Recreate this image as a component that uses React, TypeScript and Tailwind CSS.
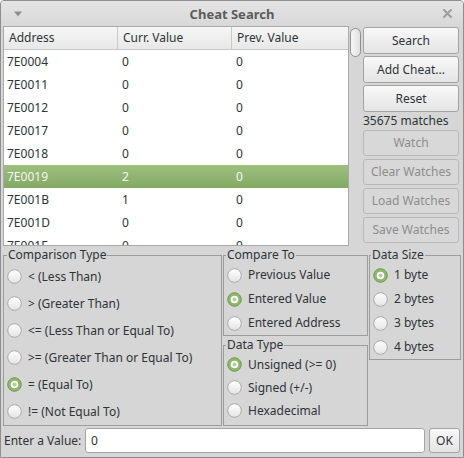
import React from "react";

function Radio({ checked }: { checked?: boolean }) {
  return (
    <svg width="15" height="15" viewBox="0 0 15 15" className="shrink-0">
      <defs>
        <linearGradient id="ru" x1="0" y1="0" x2="0" y2="1">
          <stop offset="0" stopColor="#ffffff" />
          <stop offset="1" stopColor="#e4e4e4" />
        </linearGradient>
      </defs>
      {checked ? (
        <>
          <circle cx="7.5" cy="7.5" r="6.8" fill="#8cb86a" stroke="#6f9a50" strokeWidth="1" />
          <circle cx="7.5" cy="7.5" r="3.8" fill="#ffffff" />
          <circle cx="7.5" cy="7.5" r="2" fill="#b9c8ad" />
        </>
      ) : (
        <circle cx="7.5" cy="7.5" r="6.8" fill="url(#ru)" stroke="#a9a9a9" strokeWidth="1" />
      )}
    </svg>
  );
}

function RadioRow({ label, checked, h }: { label: string; checked?: boolean; h: string }) {
  return (
    <div className={`flex items-center pl-[3px] gap-[6px] ${h}`}>
      <Radio checked={checked} />
      <span className="whitespace-nowrap">{label}</span>
    </div>
  );
}

function Btn({ label, disabled, cls }: { label: string; disabled?: boolean; cls: string }) {
  return (
    <div
      className={`${cls} w-[96px] flex items-center justify-center rounded-[3px] border ${
        disabled
          ? "border-[#b9b9b9] bg-[#d8d8d8] text-[#8d8d8d]"
          : "border-[#a3a3a3] bg-gradient-to-b from-[#f8f8f8] to-[#e4e4e4] text-[#2e3436]"
      }`}
    >
      {label}
    </div>
  );
}

const rows: [string, string, string][] = [
  ["7E0004", "0", "0"],
  ["7E0011", "0", "0"],
  ["7E0012", "0", "0"],
  ["7E0017", "0", "0"],
  ["7E0018", "0", "0"],
  ["7E0019", "2", "0"],
  ["7E001B", "1", "0"],
  ["7E001D", "0", "0"],
  ["7E001F", "0", "0"],
];

export default function App() {
  return (
    <div className="w-[464px] h-[458px] bg-[#d6d6d6] border border-[#8e8e8e] rounded-t-[4px] flex flex-col overflow-hidden text-[12px] leading-[16px] text-[#2e3436] font-['Noto_Sans',sans-serif]">
      {/* title bar */}
      <div className="h-[25px] shrink-0 flex items-center bg-gradient-to-b from-[#e4e4e4] to-[#d8d8d8]">
        <div className="w-[40px] flex justify-center">
          <svg width="10" height="6" viewBox="0 0 10 6" className="ml-[-6px]">
            <path d="M1 0.5 L9 0.5 L5 5.5 Z" fill="#8f8f8f" />
          </svg>
        </div>
        <div className="flex-1 text-center font-bold text-[13px] text-[#5c5c5c]">Cheat Search</div>
        <div className="w-[40px] flex justify-center">
          <svg width="9" height="9" viewBox="0 0 9 9" className="ml-[8px]">
            <path d="M1 1 L8 8 M8 1 L1 8" stroke="#9a9a9a" strokeWidth="1.8" strokeLinecap="round" />
          </svg>
        </div>
      </div>

      {/* main area */}
      <div className="h-[220px] shrink-0 flex pl-[2px]">
        <div className="w-[346px] h-[220px] border border-[#a9a9a9] bg-white overflow-hidden flex flex-col">
          <div className="h-[23px] shrink-0 flex bg-gradient-to-b from-[#f6f6f6] to-[#e8e8e8] border-b border-[#c6c6c6]">
            <div className="w-[114px] border-r border-[#cacaca] pl-[5px] flex items-center">Address</div>
            <div className="w-[114px] border-r border-[#cacaca] pl-[5px] flex items-center">Curr. Value</div>
            <div className="flex-1 pl-[5px] flex items-center">Prev. Value</div>
          </div>
          {rows.map((r, i) => {
            const sel = i === 5;
            return (
              <div
                key={i}
                className={`h-[23px] shrink-0 flex items-center ${
                  sel ? "bg-gradient-to-b from-[#9dc07f] to-[#84a866] text-[#f4f7f0]" : ""
                }`}
              >
                <div className="w-[114px] pl-[3px]">{r[0]}</div>
                <div className="w-[114px] pl-[4px]">{r[1]}</div>
                <div className="flex-1 pl-[4px]">{r[2]}</div>
              </div>
            );
          })}
        </div>
        <div className="w-[14px] pt-[2px] pl-[1px]">
          <div className="w-[11px] h-[29px] rounded-full border border-[#8f8f8f] bg-gradient-to-r from-[#f6f6f6] to-[#e0e0e0]" />
        </div>
        <div className="flex flex-col pt-[1px]">
          <Btn label="Search" cls="h-[27px]" />
          <Btn label="Add Cheat..." cls="h-[27px] mt-[2px]" />
          <Btn label="Reset" cls="h-[27px] mt-[2px]" />
          <div className="h-[16px] mt-[1px] flex items-center whitespace-nowrap">35675 matches</div>
          <Btn label="Watch" disabled cls="h-[26px] mt-[1px]" />
          <Btn label="Clear Watches" disabled cls="h-[26px] mt-[3px]" />
          <Btn label="Load Watches" disabled cls="h-[26px] mt-[3px]" />
          <Btn label="Save Watches" disabled cls="h-[26px] mt-[3px]" />
        </div>
      </div>

      {/* groups */}
      <div className="flex pl-[2px] mt-[1px] shrink-0">
        <fieldset className="w-[219px] h-[179px] border border-[#9c9c9c] px-0">
          <legend className="ml-[3px] px-[1px] leading-[16px]">Comparison Type</legend>
          <RadioRow h="h-[27px]" label="< (Less Than)" />
          <RadioRow h="h-[27px]" label="> (Greater Than)" />
          <RadioRow h="h-[27px]" label="<= (Less Than or Equal To)" />
          <RadioRow h="h-[27px]" label=">= (Greater Than or Equal To)" />
          <RadioRow h="h-[27px]" label="= (Equal To)" checked />
          <RadioRow h="h-[27px]" label="!= (Not Equal To)" />
        </fieldset>
        <div className="w-[145px] ml-[1px] flex flex-col gap-[1px]">
          <fieldset className="h-[89px] border border-[#9c9c9c] px-0">
            <legend className="ml-[2px] px-[1px] leading-[16px]">Compare To</legend>
            <RadioRow h="h-[24px]" label="Previous Value" />
            <RadioRow h="h-[24px]" label="Entered Value" checked />
            <RadioRow h="h-[24px]" label="Entered Address" />
          </fieldset>
          <fieldset className="h-[89px] border border-[#9c9c9c] px-0">
            <legend className="ml-[2px] px-[1px] leading-[16px]">Data Type</legend>
            <RadioRow h="h-[23px]" label="Unsigned (>= 0)" checked />
            <RadioRow h="h-[23px]" label="Signed (+/-)" />
            <RadioRow h="h-[23px]" label="Hexadecimal" />
          </fieldset>
        </div>
        <div className="w-[92px] ml-[1px]">
          <fieldset className="h-[113px] border border-[#9c9c9c] px-0">
            <legend className="ml-[1px] px-[1px] leading-[16px]">Data Size</legend>
            <RadioRow h="h-[24px]" label="1 byte" checked />
            <RadioRow h="h-[24px]" label="2 bytes" />
            <RadioRow h="h-[24px]" label="3 bytes" />
            <RadioRow h="h-[24px]" label="4 bytes" />
          </fieldset>
        </div>
      </div>

      {/* bottom row */}
      <div className="flex items-center pl-[3px] pt-[2px] shrink-0">
        <div className="w-[81px] whitespace-nowrap">Enter a Value:</div>
        <div className="w-[340px] h-[25px] rounded-[3px] border border-[#a5a5a5] bg-white flex items-center pl-[5px]">
          0
        </div>
        <div className="w-[31px] h-[25px] ml-[4px] rounded-[3px] border border-[#a3a3a3] bg-gradient-to-b from-[#f8f8f8] to-[#e4e4e4] flex items-center justify-center">
          OK
        </div>
      </div>
    </div>
  );
}
